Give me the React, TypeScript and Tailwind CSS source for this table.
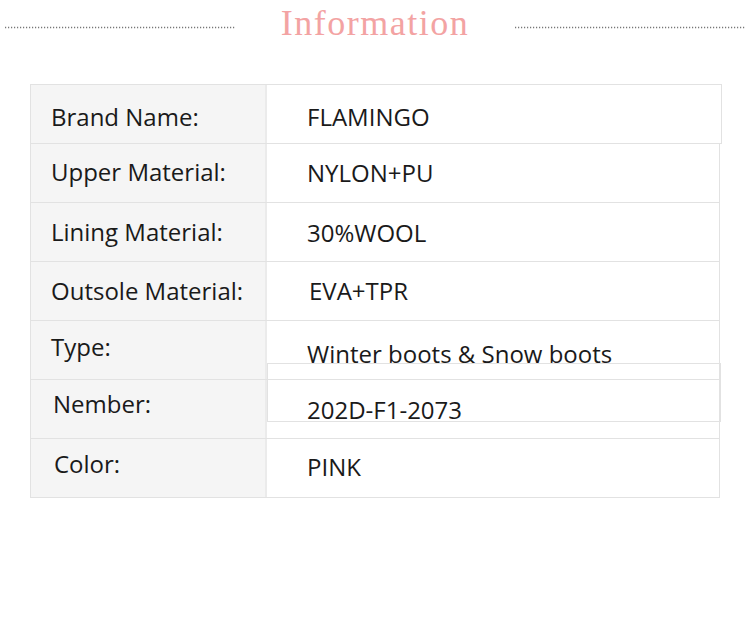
import React from "react";

type Row = { label: string; value: string; lpt: number; vpt: number; lpl: number; vpl: number; w: number };

const rows: Row[] = [
  { label: "Brand Name:", value: "FLAMINGO", lpt: 20, vpt: 20, lpl: 20, vpl: 40, w: 692 },
  { label: "Upper Material:", value: "NYLON+PU", lpt: 16, vpt: 17, lpl: 20, vpl: 40, w: 690 },
  { label: "Lining Material:", value: "30%WOOL", lpt: 17, vpt: 18, lpl: 20, vpl: 40, w: 690 },
  { label: "Outsole Material:", value: "EVA+TPR", lpt: 17, vpt: 17, lpl: 20, vpl: 42, w: 690 },
  { label: "Type:", value: "Winter boots & Snow boots", lpt: 14, vpt: 21, lpl: 20, vpl: 40, w: 690 },
  { label: "Nember:", value: "202D-F1-2073", lpt: 12, vpt: 18, lpl: 22, vpl: 40, w: 690 },
  { label: "Color:", value: "PINK", lpt: 13, vpt: 16, lpl: 23, vpl: 40, w: 690 },
];

function Dots() {
  return (
    <svg width="230" height="3" className="block">
      <line x1="0" y1="1.5" x2="230" y2="1.5" stroke="#777777" strokeWidth="1.6" strokeDasharray="1.2 1.8" />
    </svg>
  );
}

export default function App() {
  return (
    <div className="relative w-[750px] h-[624px] bg-white" style={{ fontFamily: '"Open Sans", sans-serif' }}>
      <div className="flex items-start h-[84px]">
        <div className="pl-[5px] pt-[26px]">
          <Dots />
        </div>
        <div className="flex-1 flex justify-center pt-[5px]">
          <span
            className="text-[36px] leading-[36px] tracking-[1.5px] text-[#f3a3a3]"
            style={{ fontFamily: '"Liberation Serif", serif' }}
          >
            Information
          </span>
        </div>
        <div className="pr-[5px] pt-[26px]">
          <Dots />
        </div>
      </div>

      <div className="ml-[30px] flex flex-col">
        {rows.map((r, i) => (
          <div
            key={r.label}
            className={`flex border-b border-l border-r border-[#e2e2e2] ${i === 0 ? "border-t" : ""}`}
            style={{ width: r.w, height: i === 0 ? 60 : 59 }}
          >
            <div
              className="w-[236px] shrink-0 bg-[#f5f5f5] border-r-2 border-[#ebebeb] text-[24px] leading-[24px] text-[#1a1a1a]"
              style={{ paddingTop: r.lpt, paddingLeft: r.lpl }}
            >
              {r.label}
            </div>
            <div
              className="flex-1 text-[24px] leading-[24px] text-[#1a1a1a] whitespace-nowrap"
              style={{ paddingTop: r.vpt, paddingLeft: r.vpl }}
            >
              {r.value}
            </div>
          </div>
        ))}
      </div>

      <div className="absolute left-[267px] top-[363px] w-[454px] h-[59px] border border-[#e2e2e2]" />
    </div>
  );
}
